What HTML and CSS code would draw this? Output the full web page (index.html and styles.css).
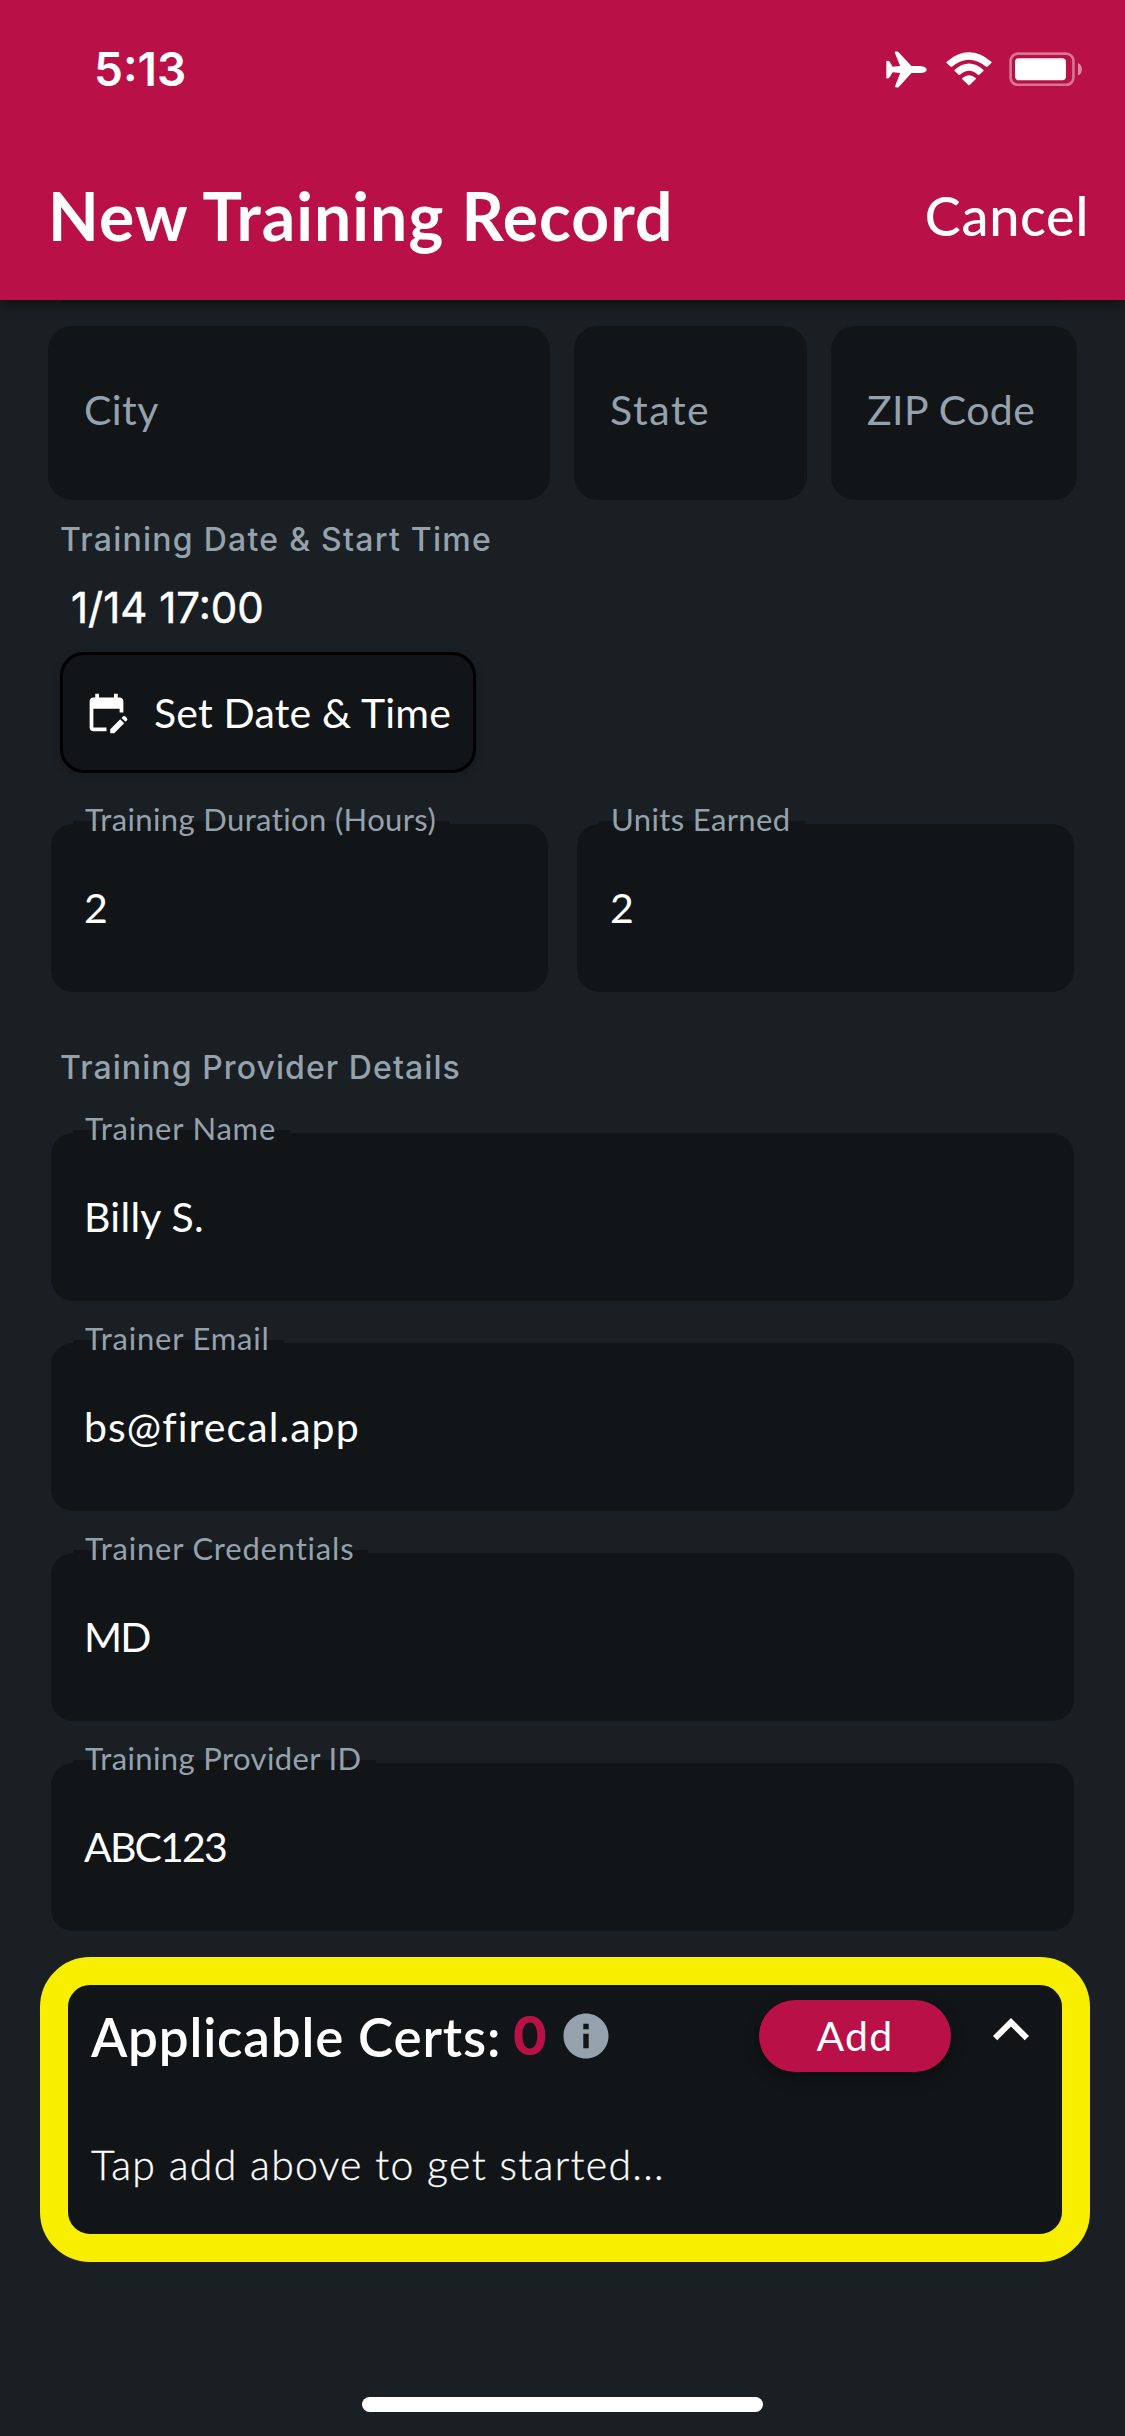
FILE: index.html
```
<!DOCTYPE html>
<html lang="en">
<head>
<meta charset="utf-8">
<title>New Training Record</title>
<link rel="stylesheet" href="styles.css">
</head>
<body>
<header class="header">
  <div class="status">
    <span class="clock">5:13</span>
    <div class="status-icons">
      <svg class="plane" viewBox="47 46 124 111"><path d="M150 91h-26L88 52q-4-5-8-5-7-1-7 2l17 42-23 2-8-14q-2-4-11-4v54q8 0 10-4l9-15 23 2-16 41q-1 3 9 3 1 0 4-3l37-41h26q20-1 20-10t-20-11z"/></svg>
      <svg class="wifi" viewBox="228 50 138 102"><path d="M230 83q-2-2 0-4 67-56 134 0 2 2 0 4l-12 11q-2 1-4 0-51-42-102 0-2 1-4 0z"/><path d="M254 107q-2-2 0-4 43-37 86 0 2 2 0 4l-12 11q-2 2-4 0-27-24-54 0-2 2-4 0z"/><path d="M277 132q-2-2 0-4 20-16 40 0 2 2 0 4l-18 17q-2 2-4 0z"/></svg>
      <svg class="battery" viewBox="417 50 220 104"><rect x="421.500" y="55" width="189" height="94" rx="22" fill="none" stroke="#fff" stroke-width="8" opacity=".42"/><rect x="435" y="69" width="153" height="66" rx="11"/><path d="M624 83q12 5 12 19t-12 19z" opacity=".5"/></svg>
    </div>
  </div>
  <div class="titlebar">
    <h1 class="title">New Training Record</h1>
    <span class="cancel">Cancel</span>
  </div>
</header>
<main class="form">
  <div class="scrolled-field"></div>
  <div class="address">
    <div class="blank city">City</div>
    <div class="blank state">State</div>
    <div class="blank zip">ZIP Code</div>
  </div>
  <h2 class="section when">Training Date &amp; Start Time</h2>
  <div class="date">1/14 17:00</div>
  <div class="set-date">
    <svg class="calendar" viewBox="0 0 24 24"><path d="M12 22H5c-1.110 0-2-.9-2-2L3.010 6c0-1.100.88-2 1.990-2h1V2h2v2h8V2h2v2h1c1.100 0 2 .9 2 2v6h-2v-2H5v10h7v2zm10.130-5.010.71-.71c.39-.39.39-1.020 0-1.410l-.71-.71c-.39-.39-1.020-.39-1.410 0l-.71.71 2.120 2.120zm-.71.71-5.300 5.300H14v-2.120l5.300-5.300 2.120 2.120z"/></svg>
    <span>Set Date &amp; Time</span>
  </div>
  <div class="pair">
    <div class="field"><span class="label">Training Duration (Hours)</span><span class="value">2</span></div>
    <div class="field"><span class="label">Units Earned</span><span class="value">2</span></div>
  </div>
  <h2 class="section provider">Training Provider Details</h2>
  <div class="stack">
    <div class="field"><span class="label wide">Trainer Name</span><span class="value">Billy S.</span></div>
    <div class="field"><span class="label wide">Trainer Email</span><span class="value email">bs@firecal.app</span></div>
    <div class="field"><span class="label wide">Trainer Credentials</span><span class="value caps">MD</span></div>
    <div class="field"><span class="label">Training Provider ID</span><span class="value caps">ABC123</span></div>
  </div>
  <section class="certs">
    <div class="certs-head">
      <span class="certs-title">Applicable Certs:</span>
      <span class="count">0</span>
      <svg class="info" viewBox="0 0 24 24"><path d="M12 2C6.480 2 2 6.480 2 12s4.480 10 10 10 10-4.480 10-10S17.520 2 12 2zm1.200 15.400h-2.400v-6.400h2.400v6.400zm0-8.400h-2.400V6.600h2.400v2.400z"/></svg>
      <span class="add">Add</span>
      <svg class="chevron" viewBox="0 0 24 24"><path d="M12 8l-6 6 1.410 1.410L12 10.830l4.590 4.580L18 14z"/></svg>
    </div>
    <p class="hint">Tap add above to get started...</p>
  </section>
</main>
<div class="home"></div>
</body>
</html>
```
FILE: styles.css
```
* { box-sizing: border-box; margin: 0; padding: 0; }
html { background: #1a1f23; }
body {
  width: 1125px;
  height: 2436px;
  overflow: hidden;
  display: flex;
  flex-direction: column;
  background: #1a1f23;
  color: #fff;
  font-family: Lato, "Open Sans", sans-serif;
  font-size: 41px;
  font-variant-ligatures: none;
}
svg { display: block; flex: none; fill: #fff; }

.header {
  flex: none;
  height: 300px;
  background: #b81047;
  box-shadow: 0 4px 12px rgba(0, 0, 0, .45);
  z-index: 1;
}
.status {
  height: 138px;
  padding: 0 43px 0 94px;
  display: flex;
  align-items: center;
  justify-content: space-between;
}
.clock { font: 600 46px/60px Inter, sans-serif; letter-spacing: 0; }
.status-icons { display: flex; align-items: center; gap: 19px; }
.plane { width: 41px; height: 37px; }
.wifi { width: 46px; height: 34px; }
.battery { width: 73.300px; height: 34.600px; margin-left: -2px; }
.titlebar {
  height: 156px;
  padding: 0 36px 0 48px;
  display: flex;
  align-items: center;
  justify-content: space-between;
}
.title { font-size: 66px; font-weight: 700; letter-spacing: 1.050px; line-height: 80px; }
.cancel { font-size: 54px; font-weight: 500; letter-spacing: .7px; line-height: 66px; }

.form { flex: none; height: 2097px; }
.scrolled-field { height: 2px; margin: 0 62px 24px; background: #111518; }
.address { display: flex; gap: 24px; padding-left: 48px; }
.blank {
  height: 174px;
  padding: 0 0 7px 36px;
  display: flex;
  align-items: center;
  border-radius: 24px;
  background: #111518;
  color: #95a1ac;
}
.city { width: 502px; letter-spacing: .4px; }
.state { width: 233px; letter-spacing: 1.600px; }
.zip { width: 246px; letter-spacing: .4px; }

.section { font: 500 32px/79px Inter, sans-serif; color: #95a1ac; padding-left: 60px; }
.when { letter-spacing: 1.250px; }
.provider { letter-spacing: 1.080px; line-height: 71px; padding-top: 40px; height: 141px; }
.date { font: 400 42px/57px Inter, sans-serif; padding-left: 71px; -webkit-text-stroke: .5px #fff; }
.set-date {
  width: 416px;
  height: 121px;
  margin: 16px 0 51px 60px;
  padding: 0 0 0 21px;
  display: flex;
  align-items: center;
  gap: 25px;
  border: 3px solid #000;
  border-radius: 24px;
  background: #111518;
  box-shadow: 0 3px 8px rgba(0, 0, 0, .2);
  letter-spacing: .2px;
}
.calendar { width: 45px; height: 45px; }

.pair { display: grid; grid-template-columns: 1fr 1fr; gap: 29px; padding: 0 51px; }
.stack { display: grid; gap: 42px; padding: 0 51px; }
.field {
  position: relative;
  height: 168px;
  padding: 0 0 2px 33px;
  display: flex;
  align-items: center;
  border-radius: 22px;
  background: #111518;
}
/* floating label, with the notch it cuts above the field's top edge */
.label {
  position: absolute;
  left: 22px;
  top: -23px;
  padding: 0 14px 0 12px;
  font-size: 31px;
  line-height: 37px;
  letter-spacing: .38px;
  color: #95a1ac;
  background: linear-gradient(transparent 20px, #111518 20px);
}
.wide { letter-spacing: .8px; }
.value { letter-spacing: .27px; }
.email { letter-spacing: 1.080px; }
.caps { letter-spacing: -1.850px; }

.certs {
  width: 1050px;
  height: 305px;
  margin: 26px 0 0 40px;
  padding: 15px 15px 0 23px;
  border: 28px solid #f7ee00;
  border-radius: 50px;
  background: #111518;
}
.certs-head { height: 72px; display: flex; align-items: center; }
.certs-title { width: 420px; font-size: 53px; font-weight: 600; letter-spacing: .8px; }
.count { width: 48px; padding-left: 1px; color: #b81047; font: 700 53px/64px Inter, sans-serif; }
.info { width: 54px; height: 54px; fill: #95a1ac; }
.add {
  width: 192px;
  margin: 0 24px 0 146px;
  border-radius: 36px;
  background: #b81047;
  box-shadow: 0 6px 14px rgba(0, 0, 0, .35);
  text-align: center;
  line-height: 72px;
  letter-spacing: 1.300px;
}
.chevron { width: 72px; height: 72px; margin-bottom: 12px; }
.hint { margin-top: 68px; font-weight: 300; line-height: 50px; letter-spacing: 1.300px; -webkit-text-stroke: .3px #fff; }

.home { flex: none; width: 401px; height: 15px; margin: 0 auto; border-radius: 8px; background: #fff; }
```
